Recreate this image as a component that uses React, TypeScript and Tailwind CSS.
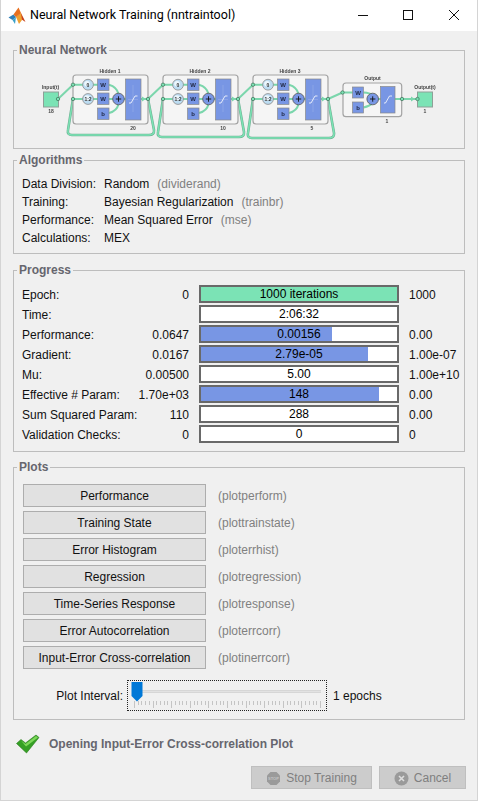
import React from "react";

const Panel = ({ title, className, children }: { title: string; className: string; children: React.ReactNode }) => (
  <fieldset className={`border border-[#bdbdbd] mx-[12px] ${className}`}>
    <legend className="ml-[3px] px-[2px] text-[12px] leading-[14px] font-bold text-[#66666e]">{title}</legend>
    {children}
  </fieldset>
);

const Layer = ({ dx, title, size, sizeX, loopBottom }: { dx: number; title: string; size: string; sizeX: number; loopBottom: number }) => {
  const g = (x: number) => x + dx;
  const loop = `M${g(148)} 99 L${g(154)} ${loopBottom - 5} Q${g(154.5)} ${loopBottom} ${g(149)} ${loopBottom} L${g(72)} ${loopBottom} Q${g(67)} ${loopBottom} ${g(68)} ${loopBottom - 5} L${g(73)} 99`;
  return (
    <g>
      <path d={loop} fill="none" stroke="#6fae92" strokeWidth="2.6" />
      <path d={loop} fill="none" stroke="#7be3b5" strokeWidth="1.5" />
      <rect x={g(73)} y="75" width="75" height="49" rx="3" fill="#f5f5f5" stroke="#a3a3a3" strokeWidth="1.2" />
      <text x={g(110)} y="72.5" textAnchor="middle" fontSize="5" fontWeight="700" fill="#444">{title}</text>
      <text x={g(sizeX)} y="129.8" textAnchor="middle" fontSize="5" fontWeight="700" fill="#444">{size}</text>
      <path d={`M${g(73)} 84.7 H${g(98)} M${g(73)} 99 H${g(98)} M${g(109)} 84.7 Q${g(117)} 87 ${g(118.5)} 94 M${g(109)} 99 H${g(113)} M${g(109)} 113 Q${g(117)} 111 ${g(118.5)} 104 M${g(124)} 99 H${g(126)} M${g(141)} 99 H${g(148)}`} fill="none" stroke="#7bd6ac" strokeWidth="2" />
      {[84.7, 99].map((y, i) => (
        <g key={y}>
          <circle cx={g(88)} cy={y} r="5.4" fill="#bcdcf2" stroke="#8a8a8a" strokeWidth="0.8" />
          <circle cx={g(87)} cy={y - 1} r="2.8" fill="#ecf6fc" />
          <text x={g(88)} y={y + 1.8} textAnchor="middle" fontSize="5" fontWeight="700" fill="#333">{i === 0 ? "0" : "1:2"}</text>
          <circle cx={g(73)} cy={y} r="1.7" fill="#7be3b5" stroke="#3f6f58" strokeWidth="0.7" />
        </g>
      ))}
      {[79, 93, 108].map((y, i) => (
        <g key={y}>
          <rect x={g(97.5)} y={y} width="11.5" height="11.5" fill="#7896e4" stroke="#8a8a8a" strokeWidth="0.7" />
          <text x={g(103.2)} y={y + 8} textAnchor="middle" fontSize="6" fontWeight="700" fill="#1d2540">{i === 2 ? "b" : "W"}</text>
        </g>
      ))}
      <circle cx={g(118.5)} cy="99" r="5.8" fill="#7896e4" stroke="#555" strokeWidth="0.8" />
      <path d={`M${g(115.8)} 99 H${g(121.2)} M${g(118.5)} 96.3 V101.7`} stroke="#111" strokeWidth="0.9" />
      <rect x={g(125.5)} y="79" width="15.5" height="41" fill="#7896e4" stroke="#8a8a8a" strokeWidth="0.7" />
      <path d={`M${g(133)} 85 V112 M${g(128)} 99.5 H${g(138)}`} fill="none" stroke="#9fb3ea" strokeWidth="0.5" />
      <path d={`M${g(129)} 103 H${g(131)} L${g(135)} 96 H${g(137.5)}`} fill="none" stroke="#fff" strokeWidth="0.8" />
      <path d={`M${g(142)} 96.5 L${g(146)} 99 L${g(142)} 101.5 Z`} fill="#7bd6ac" />
      <circle cx={g(148)} cy="99" r="1.7" fill="#7be3b5" stroke="#3f6f58" strokeWidth="0.7" />
    </g>
  );
};

const Diagram = () => (
  <svg width="450" height="90" viewBox="14 57 450 90" className="block blur-[0.35px]" style={{ fontFamily: '"Liberation Sans", sans-serif' }}>
    <rect x="43.5" y="92" width="15" height="15" fill="#7be3b5" stroke="#8f9f98" strokeWidth="1" />
    <text x="50.5" y="89" textAnchor="middle" fontSize="5" fontWeight="700" fill="#444">Input(t)</text>
    <text x="51" y="113" textAnchor="middle" fontSize="5" fontWeight="700" fill="#444">18</text>
    <path d="M58 99 L73 84.7 M148 99 L163 84.7 M238 99 L253 84.7 M328 99 L342.5 92.5" fill="none" stroke="#7bd6ac" strokeWidth="2" />
    <Layer dx={0} title="Hidden 1" size="20" sizeX={133} loopBottom={135} />
    <Layer dx={90} title="Hidden 2" size="10" sizeX={133} loopBottom={137} />
    <Layer dx={180} title="Hidden 3" size="5" sizeX={132} loopBottom={138} />
    <circle cx="58" cy="99" r="1.7" fill="#7be3b5" stroke="#3f6f58" strokeWidth="0.7" />
    <rect x="343" y="83" width="58.7" height="33.7" rx="3" fill="#f5f5f5" stroke="#a3a3a3" strokeWidth="1.2" />
    <text x="372.5" y="80" textAnchor="middle" fontSize="5" fontWeight="700" fill="#444">Output</text>
    <text x="387" y="123" textAnchor="middle" fontSize="5" fontWeight="700" fill="#444">1</text>
    <path d="M342.5 92.5 H353 M363.5 92.5 Q370 93 372.5 95 M363.5 107.5 Q370 106 372.5 103 M378 99 H381 M395 99 H416" fill="none" stroke="#7bd6ac" strokeWidth="2" />
    <circle cx="342.5" cy="92.5" r="1.7" fill="#7be3b5" stroke="#3f6f58" strokeWidth="0.7" />
    {[87, 102].map((y, i) => (
      <g key={y}>
        <rect x="352.5" y={y} width="11" height="11" fill="#7896e4" stroke="#8a8a8a" strokeWidth="0.7" />
        <text x="358" y={y + 8} textAnchor="middle" fontSize="6" fontWeight="700" fill="#1d2540">{i === 1 ? "b" : "W"}</text>
      </g>
    ))}
    <circle cx="372.7" cy="99" r="5.8" fill="#7896e4" stroke="#555" strokeWidth="0.8" />
    <path d="M370 99 H375.4 M372.7 96.3 V101.7" stroke="#111" strokeWidth="0.9" />
    <rect x="380.5" y="86.5" width="14.5" height="26.5" fill="#7896e4" stroke="#8a8a8a" strokeWidth="0.7" />
    <path d="M384 103 H385.5 L389.5 96 H392" fill="none" stroke="#fff" strokeWidth="0.8" />
    <circle cx="402" cy="99" r="1.7" fill="#7be3b5" stroke="#3f6f58" strokeWidth="0.7" />
    <path d="M411 96.5 L415 99 L411 101.5 Z" fill="#7bd6ac" />
    <rect x="417.5" y="92" width="15" height="15" fill="#7be3b5" stroke="#8f9f98" strokeWidth="1" />
    <circle cx="417.5" cy="99" r="1.7" fill="#7be3b5" stroke="#3f6f58" strokeWidth="0.7" />
    <text x="425" y="89" textAnchor="middle" fontSize="5" fontWeight="700" fill="#444">Output(t)</text>
    <text x="425" y="113" textAnchor="middle" fontSize="5" fontWeight="700" fill="#444">1</text>
  </svg>
);

const algorithms = [
  ["Data Division:", "Random", "(dividerand)"],
  ["Training:", "Bayesian Regularization", "(trainbr)"],
  ["Performance:", "Mean Squared Error", "(mse)"],
  ["Calculations:", "MEX", ""],
];

type Row = { label: string; from: string; value: string; to: string; fill: number; green?: boolean };
const rows: Row[] = [
  { label: "Epoch:", from: "0", value: "1000 iterations", to: "1000", fill: 100, green: true },
  { label: "Time:", from: "", value: "2:06:32", to: "", fill: 0 },
  { label: "Performance:", from: "0.0647", value: "0.00156", to: "0.00", fill: 67 },
  { label: "Gradient:", from: "0.0167", value: "2.79e-05", to: "1.00e-07", fill: 85 },
  { label: "Mu:", from: "0.00500", value: "5.00", to: "1.00e+10", fill: 0 },
  { label: "Effective # Param:", from: "1.70e+03", value: "148", to: "0.00", fill: 91 },
  { label: "Sum Squared Param:", from: "110", value: "288", to: "0.00", fill: 0 },
  { label: "Validation Checks:", from: "0", value: "0", to: "0", fill: 0 },
];

const plots = [
  ["Performance", "(plotperform)"],
  ["Training State", "(plottrainstate)"],
  ["Error Histogram", "(ploterrhist)"],
  ["Regression", "(plotregression)"],
  ["Time-Series Response", "(plotresponse)"],
  ["Error Autocorrelation", "(ploterrcorr)"],
  ["Input-Error Cross-correlation", "(plotinerrcorr)"],
];

const Logo = () => (
  <svg width="18" height="18" viewBox="0 0 18 18" className="shrink-0">
    <path d="M0.5 10.5 L5.5 7.5 L8 10 L4.5 13 Z" fill="#2f7fb8" />
    <path d="M4.5 13 L8 10 L7 17 Z" fill="#3aa0c8" />
    <path d="M5.5 7.5 L10.5 0.5 L13 6 L8 10 Z" fill="#e8701f" />
    <path d="M10.5 0.5 L13 6 L17.5 15 L13 12 L8 10 L13 6 Z" fill="#c8401a" />
    <path d="M8 10 L13 6 L14 13 L11 17 Z" fill="#f0a030" />
  </svg>
);

export default function App() {
  return (
    <div className="w-[478px] h-[801px] bg-[#f0f0f0] border-x border-b border-[#d4d4d4] text-[12px] text-[#111] overflow-hidden" style={{ fontFamily: '"Liberation Sans", Arial, sans-serif' }}>
      <div className="h-[31px] bg-white flex items-center pl-[8px] -mx-px">
        <Logo />
        <span className="ml-[4px] text-[12.5px] text-[#000]" style={{ fontFamily: 'Roboto, sans-serif' }}>Neural Network Training (nntraintool)</span>
        <div className="ml-auto flex items-center h-full">
          <svg width="46" height="31" viewBox="0 0 46 31"><path d="M18 15.5 H28" stroke="#111" strokeWidth="1" /></svg>
          <svg width="46" height="31" viewBox="0 0 46 31"><rect x="17.5" y="10.5" width="9" height="9" fill="none" stroke="#111" strokeWidth="1" /></svg>
          <svg width="46" height="31" viewBox="0 0 46 31"><path d="M17 10 L27 20 M27 10 L17 20" stroke="#111" strokeWidth="1" /></svg>
        </div>
      </div>

      <Panel title="Neural Network" className="mt-[12px] h-[106px]">
        <Diagram />
      </Panel>

      <Panel title="Algorithms" className="mt-[4px] h-[101px]">
        <div className="pl-[8px] pt-[8px] flex flex-col">
          {algorithms.map(([a, b, c]) => (
            <div key={a} className="h-[18px] flex items-center">
              <span className="w-[82px]">{a}</span>
              <span>{b}</span>
              <span className="ml-[8px] text-[#808080]">{c}</span>
            </div>
          ))}
        </div>
      </Panel>

      <Panel title="Progress" className="mt-[9px] h-[189px]">
        <div className="pt-[8px] flex flex-col gap-[2px]">
          {rows.map((r) => (
            <div key={r.label} className="h-[18px] flex items-center">
              <span className="w-[100px] pl-[8px] pt-[2px] whitespace-nowrap">{r.label}</span>
              <span className="w-[75px] pt-[2px] text-right">{r.from}</span>
              <div className="relative ml-[10px] w-[200px] h-[18px] border-2 border-[#696969] bg-white flex items-center justify-center">
                <div className={`absolute left-0 top-0 bottom-0 ${r.green ? "bg-[#7be3b5]" : "bg-[#7896e4]"}`} style={{ width: `${r.fill}%` }} />
                <span className="relative text-[#000]">{r.value}</span>
              </div>
              <span className="ml-[10px] pt-[2px]">{r.to}</span>
            </div>
          ))}
        </div>
      </Panel>

      <Panel title="Plots" className="mt-[8px] h-[260px]">
        <div className="pl-[9px] pt-[10px] flex flex-col gap-[4px]">
          {plots.map(([a, b]) => (
            <div key={a} className="flex items-center">
              <button className="w-[183px] h-[23px] bg-[#e1e1e1] border border-[#adadad] text-[12px] text-[#111]">{a}</button>
              <span className="ml-[12px] text-[#808080]">{b}</span>
            </div>
          ))}
        </div>
        <div className="flex items-center mt-[11px]">
          <span className="w-[109px] text-right">Plot Interval:</span>
          <div className="relative ml-[4px] w-[200px] h-[31px] border border-dotted border-[#222]">
            <div className="absolute left-[14px] right-[5px] top-[9px] h-[3px] bg-[#e2e2e2] border-y border-[#d6d6d6]" />
            <svg className="absolute left-[3px] top-[1px]" width="12" height="20" viewBox="0 0 12 20"><path d="M0.5 0 H11.5 V14 L6 19.5 L0.5 14 Z" fill="#0078d7" /></svg>
            <svg className="absolute left-[6px] top-[20px]" width="190" height="8" viewBox="0 0 190 8">
              {Array.from({ length: 51 }).map((_, i) => (
                <path key={i} d={`M${Math.round(i * 3.72) + 0.5} 0 V${i % 5 === 0 ? 7 : 4}`} stroke="#c4c4c4" strokeWidth="1" />
              ))}
            </svg>
          </div>
          <span className="ml-[6px]">1 epochs</span>
        </div>
      </Panel>

      <div className="flex items-center mt-[13px] ml-[15px] h-[22px]">
        <svg width="24" height="20" viewBox="0 0 24 20">
          <path d="M0.5 9.5 L5 5.5 L9.5 9 L20 1 L23 3.5 L10.5 19 Z" fill="#35a025" stroke="#2b7a1e" strokeWidth="0.6" />
          <path d="M5 6.5 L9.5 10 L20 2 L22 3.5 L10 12.5 Z" fill="#7dd85a" />
        </svg>
        <span className="ml-[9px] font-bold text-[#66666e]">Opening Input-Error Cross-correlation Plot</span>
      </div>

      <div className="flex justify-end gap-[7px] mt-[11px] mr-[11px]">
        <button className="w-[121px] h-[23px] pt-[1px] bg-[#cccccc] border border-[#bfbfbf] flex items-center justify-center text-[#7f7f7f]">
          <svg width="15" height="15" viewBox="0 0 15 15" className="mr-[5px]">
            <path d="M4.5 1 H10.5 L14 4.5 V10.5 L10.5 14 H4.5 L1 10.5 V4.5 Z" fill="#9a9a9a" />
            <text x="7.5" y="9" textAnchor="middle" fontSize="4" fontWeight="700" fill="#c4c4c4">STOP</text>
          </svg>
          Stop Training
        </button>
        <button className="w-[87px] h-[23px] pt-[1px] bg-[#cccccc] border border-[#bfbfbf] flex items-center justify-center text-[#7f7f7f]">
          <svg width="15" height="15" viewBox="0 0 15 15" className="mr-[5px]"><circle cx="7.5" cy="7.5" r="7" fill="#9a9a9a" /><path d="M5 5 L10 10 M10 5 L5 10" stroke="#ddd" strokeWidth="1.6" /></svg>
          Cancel
        </button>
      </div>
    </div>
  );
}
